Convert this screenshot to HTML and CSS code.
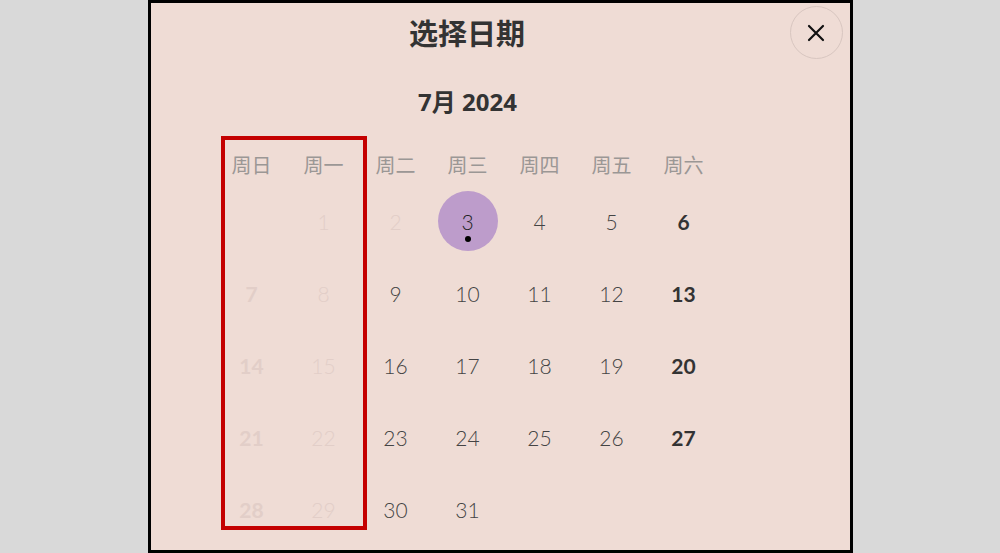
FILE: index.html
```html
<!DOCTYPE html>
<html>
<head>
    <title>选择日期</title>
    <link rel="stylesheet" href="styles.css">
</head>
<body>
    <!-- Date picker dialog -->
    <div class="modal">
        <div class="modal-header">
            <h1 class="modal-title">选择日期</h1>
            <button type="button" class="close-button" aria-label="关闭">
                <svg width="18" height="18" viewBox="0 0 18 18">
                    <path d="M2 2 L16 16 M16 2 L2 16" stroke="#111" stroke-width="2.2" stroke-linecap="round" fill="none"/>
                </svg>
            </button>
        </div>

        <div class="modal-body">
            <h2 class="month-label">7月 2024</h2>

            <div class="calendar">
                <div class="weekday">周日</div>
                <div class="weekday">周一</div>
                <div class="weekday">周二</div>
                <div class="weekday">周三</div>
                <div class="weekday">周四</div>
                <div class="weekday">周五</div>
                <div class="weekday">周六</div>

                <div class="day empty"></div>
                <div class="day disabled">1</div>
                <div class="day disabled">2</div>
                <div class="day selected"><span class="day-circle">3<span class="day-dot"></span></span></div>
                <div class="day">4</div>
                <div class="day">5</div>
                <div class="day weekend">6</div>

                <div class="day disabled weekend">7</div>
                <div class="day disabled">8</div>
                <div class="day">9</div>
                <div class="day">10</div>
                <div class="day">11</div>
                <div class="day">12</div>
                <div class="day weekend">13</div>

                <div class="day disabled weekend">14</div>
                <div class="day disabled">15</div>
                <div class="day">16</div>
                <div class="day">17</div>
                <div class="day">18</div>
                <div class="day">19</div>
                <div class="day weekend">20</div>

                <div class="day disabled weekend">21</div>
                <div class="day disabled">22</div>
                <div class="day">23</div>
                <div class="day">24</div>
                <div class="day">25</div>
                <div class="day">26</div>
                <div class="day weekend">27</div>

                <div class="day disabled weekend">28</div>
                <div class="day disabled">29</div>
                <div class="day">30</div>
                <div class="day">31</div>

                <!-- Highlight around the unavailable columns -->
                <div class="highlight-box"></div>
            </div>
        </div>
    </div>
</body>
</html>
```

FILE: styles.css
```css
body {
    background: #d9d9d9;
    font-family: Lato, "Noto Sans CJK SC", sans-serif;
    color: #333;
    margin: 0;
    padding: 0;
}

/* Dialog frame */
.modal {
    width: 699px;
    height: 547px;
    margin: 0 auto;
    border: 3px solid #000;
    background: #efdcd5;
    display: flex;
    flex-direction: column;
    overflow: hidden;
}

.modal-header {
    display: flex;
    align-items: flex-start;
    gap: 6px;
    padding: 3px 7px 0 0;
}

.modal-title {
    flex: 1;
    margin: 0;
    padding-top: 8px;
    text-align: center;
    font-family: "Noto Sans CJK SC", sans-serif;
    font-size: 29px;
    line-height: 36px;
    font-weight: bold;
    color: #333;
}

.close-button {
    width: 53px;
    height: 53px;
    border: 1px solid #d8c6c0;
    border-radius: 50%;
    background: transparent;
    display: flex;
    align-items: center;
    justify-content: center;
    padding: 0;
    cursor: pointer;
}

.modal-body {
    display: flex;
    flex-direction: column;
    align-items: center;
    padding-right: 65px;
}

.month-label {
    margin: 28px 0 0 0;
    font-family: "Noto Sans", "Noto Sans CJK SC", sans-serif;
    font-size: 24px;
    line-height: 30px;
    font-weight: bold;
    color: #333;
}

/* Calendar grid */
.calendar {
    position: relative;
    display: grid;
    grid-template-columns: repeat(7, 72px);
    grid-template-rows: 41px;
    grid-auto-rows: 72px;
    margin-top: 27px;
}

.weekday {
    display: flex;
    align-items: center;
    justify-content: center;
    font-family: "Noto Sans CJK SC", sans-serif;
    font-size: 20px;
    color: #9b9795;
}

.day {
    display: flex;
    align-items: center;
    justify-content: center;
    font-size: 21px;
    font-weight: 300;
    color: #444;
}

.day.weekend {
    font-weight: bold;
    color: #333;
}

.day.disabled {
    color: #e2cec8;
}

.day-circle {
    position: relative;
    width: 60px;
    height: 60px;
    border-radius: 50%;
    background: #bd9ccb;
    display: flex;
    align-items: center;
    justify-content: center;
    color: #222;
}

.day-dot {
    position: absolute;
    left: 27px;
    bottom: 9px;
    width: 6px;
    height: 6px;
    border-radius: 50%;
    background: #000;
}

.highlight-box {
    position: absolute;
    left: 5px;
    top: -8px;
    width: 138px;
    height: 386px;
    border: 4px solid #c40000;
    pointer-events: none;
}
```
